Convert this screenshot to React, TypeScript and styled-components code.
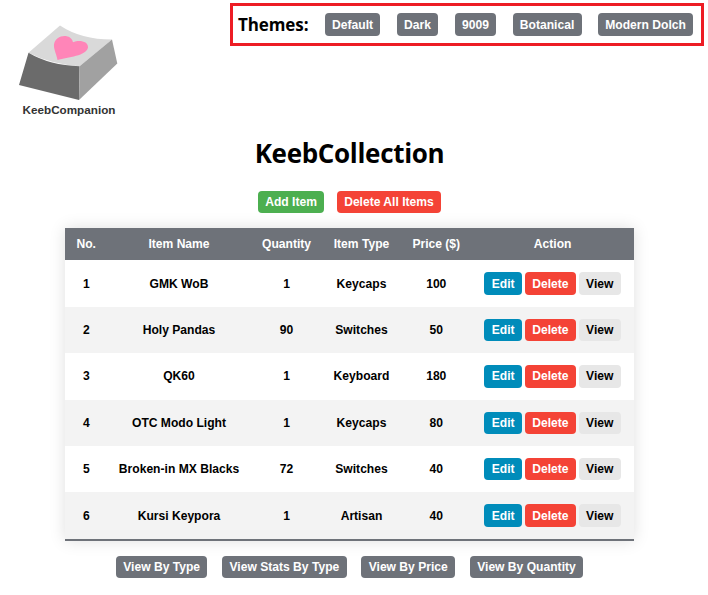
import React from "react";
import styled, { createGlobalStyle } from "styled-components";

const GlobalStyle = createGlobalStyle`
  * { box-sizing: border-box; }
  body {
    margin: 0;
    background: #fff;
    color: #000;
    font-family: "Liberation Sans", Arial, sans-serif;
    font-size: 12.1px;
    font-weight: 700;
  }
`;

const Page = styled.div`
  width: 708px;
  height: 595px;
  overflow: hidden;
  display: flex;
  flex-direction: column;
`;

const Header = styled.header`
  display: flex;
  justify-content: space-between;
  align-items: flex-start;
  height: 137px;
  padding: 3px 4px 0 16px;
`;

const Brand = styled.div`
  width: 106px;
  padding-top: 19px;
  text-align: center;
`;

const Logo = styled.svg`
  display: block;
  width: 106px;
  height: 80px;
`;

const BrandName = styled.div`
  font-size: 11.7px;
  line-height: 14px;
  padding-top: 1px;
  color: #333;
  white-space: nowrap;
`;

const Themes = styled.nav`
  display: flex;
  align-items: center;
  width: 474px;
  height: 43px;
  border: 3px solid #ed1c24;
  padding: 0 7px 0 5px;
  gap: 16.4px;
`;

const ThemesLabel = styled.span`
  font-family: "Open Sans", "Noto Sans", sans-serif;
  font-size: 17px;
  letter-spacing: -0.1px;
  line-height: 24px;
  width: 70.4px;
  white-space: nowrap;
`;

const tones = {
  gray: ["#6e7279", "#fff"],
  green: ["#4caf50", "#fff"],
  red: ["#f44336", "#fff"],
  blue: ["#008cba", "#fff"],
  light: ["#e7e7e7", "#000"],
};

const Button = styled.button<{ $tone?: keyof typeof tones }>`
  height: 22.5px;
  padding: 0 7.3px;
  border: 0;
  border-radius: 4px;
  background: ${(p) => tones[p.$tone ?? "gray"][0]};
  color: ${(p) => tones[p.$tone ?? "gray"][1]};
  font: inherit;
  line-height: 22px;
  white-space: nowrap;
  flex: none;
`;

const Title = styled.h1`
  margin: 0;
  height: 53.5px;
  font-family: "Open Sans", "Noto Sans", sans-serif;
  font-size: 26px;
  letter-spacing: -0.32px;
  line-height: 32px;
  text-align: center;
  padding-right: 9px;
`;

const ButtonRow = styled.div<{ $gap: number }>`
  display: flex;
  justify-content: center;
  gap: ${(p) => p.$gap}px;
  padding-right: 9px;
`;

const Table = styled.div`
  width: 569px;
  margin: 15px 0 15px 65px;
  border-bottom: 2px solid #6e7279;
  box-shadow: 0 0 15px rgba(0, 0, 0, 0.13);
  flex: none;
`;

const Row = styled.div<{ $head?: boolean; $shaded?: boolean }>`
  display: grid;
  grid-template-columns: 42.5px 143px 72px 78px 71.5px 161.2px;
  align-items: center;
  justify-items: center;
  height: ${(p) => (p.$head ? 32.4 : 46.4)}px;
  background: ${(p) => (p.$head ? "#6e7279" : p.$shaded ? "#f3f3f3" : "#fff")};
  color: ${(p) => (p.$head ? "#fff" : "#000")};
`;

const Actions = styled.div`
  display: flex;
  gap: 3px;
`;

const themes = ["Default", "Dark", "9009", "Botanical", "Modern Dolch"];
const columns = ["No.", "Item Name", "Quantity", "Item Type", "Price ($)", "Action"];
const items = [
  { name: "GMK WoB", quantity: 1, type: "Keycaps", price: 100 },
  { name: "Holy Pandas", quantity: 90, type: "Switches", price: 50 },
  { name: "QK60", quantity: 1, type: "Keyboard", price: 180 },
  { name: "OTC Modo Light", quantity: 1, type: "Keycaps", price: 80 },
  { name: "Broken-in MX Blacks", quantity: 72, type: "Switches", price: 40 },
  { name: "Kursi Keypora", quantity: 1, type: "Artisan", price: 40 },
];
const views = ["View By Type", "View Stats By Type", "View By Price", "View By Quantity"];

export default function App() {
  return (
    <Page>
      <GlobalStyle />
      <Header>
        <Brand>
          <Logo viewBox="16 22 106 80">
            <path d="M60 25.5Q81 39.5 112 39.5L79.6 66.3Q50 64 28.5 52.8Z" fill="#d9d9d9" />
            <path d="M28.5 52.8Q50 65.5 79.6 66.3L79 100L19 85Z" fill="#6b6b6b" />
            <path d="M79.6 66.3L112 39.5L117.3 63.5L79 100Z" fill="#a1a1a1" />
            <path
              d="M57.5 60C56.5 54 53.5 49 54 44.5C55 34.5 71 32.5 73 42.2C79 39.5 88.5 41 88 47.5C86.5 56 68 57 57.5 60Z"
              fill="#ff85b8"
            />
          </Logo>
          <BrandName>KeebCompanion</BrandName>
        </Brand>
        <Themes>
          <ThemesLabel>Themes:</ThemesLabel>
          {themes.map((t) => (
            <Button key={t}>{t}</Button>
          ))}
        </Themes>
      </Header>
      <Title>KeebCollection</Title>
      <ButtonRow $gap={12.6}>
        <Button $tone="green">Add Item</Button>
        <Button $tone="red">Delete All Items</Button>
      </ButtonRow>
      <Table>
        <Row $head>
          {columns.map((c) => (
            <span key={c}>{c}</span>
          ))}
        </Row>
        {items.map((item, i) => (
          <Row key={item.name} $shaded={i % 2 === 1}>
            <span>{i + 1}</span>
            <span>{item.name}</span>
            <span>{item.quantity}</span>
            <span>{item.type}</span>
            <span>{item.price}</span>
            <Actions>
              <Button $tone="blue">Edit</Button>
              <Button $tone="red">Delete</Button>
              <Button $tone="light">View</Button>
            </Actions>
          </Row>
        ))}
      </Table>
      <ButtonRow $gap={14.8}>
        {views.map((v) => (
          <Button key={v}>{v}</Button>
        ))}
      </ButtonRow>
    </Page>
  );
}
